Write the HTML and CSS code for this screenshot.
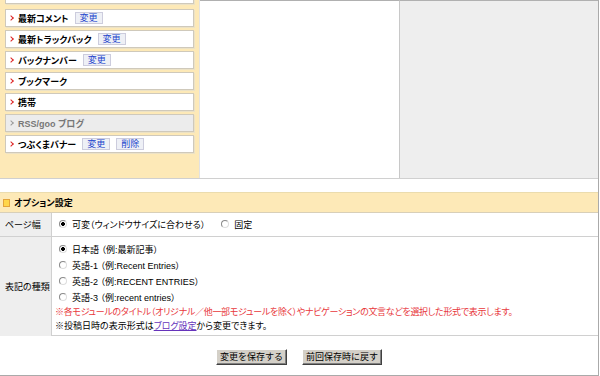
FILE: index.html
```html
<!DOCTYPE html>
<html lang="ja">
<head>
    <meta charset="UTF-8">
    <title>デザイン設定</title>
    <link rel="stylesheet" href="styles.css">
</head>
<body>
    <div class="page">
        <div class="layout">
            <div class="side">
                <ul class="mods">
                    <li class="mod mod-cut"></li>
                    <li class="mod"><span class="name">最新コメント</span><span class="tag">変更</span></li>
                    <li class="mod"><span class="name">最新トラックバック</span><span class="tag">変更</span></li>
                    <li class="mod"><span class="name">バックナンバー</span><span class="tag">変更</span></li>
                    <li class="mod"><span class="name">ブックマーク</span></li>
                    <li class="mod"><span class="name">携帯</span></li>
                    <li class="mod mod-off"><span class="name">RSS/goo ブログ</span></li>
                    <li class="mod"><span class="name">つぶくまバナー</span><span class="tag">変更</span><span class="tag">削除</span></li>
                </ul>
            </div>
            <div class="main"></div>
            <div class="extra"></div>
        </div>

        <div class="options">
            <h2 class="opt-head"><span class="opt-icon"></span>オプション設定</h2>
            <table class="opt-table">
                <tr class="row-width">
                    <th>ページ幅</th>
                    <td>
                        <label class="choice"><input type="radio" name="width" checked>可変（ウィンドウサイズに合わせる）</label>
                        <label class="choice choice-fixed"><input type="radio" name="width">固定</label>
                    </td>
                </tr>
                <tr class="row-lang">
                    <th>表記の種類</th>
                    <td>
                        <label class="choice line"><input type="radio" name="lang" checked>日本語 （例:最新記事）</label>
                        <label class="choice line"><input type="radio" name="lang">英語-1 （例:Recent Entries）</label>
                        <label class="choice line"><input type="radio" name="lang">英語-2 （例:RECENT ENTRIES）</label>
                        <label class="choice line"><input type="radio" name="lang">英語-3 （例:recent entries）</label>
                        <p class="note note-red">※各モジュールのタイトル（オリジナル／他一部モジュールを除く）やナビゲーションの文言などを選択した形式で表示します。</p>
                        <p class="note">※投稿日時の表示形式は<a href="#">ブログ設定</a>から変更できます。</p>
                    </td>
                </tr>
            </table>
            <div class="actions">
                <button>変更を保存する</button>
                <button>前回保存時に戻す</button>
            </div>
        </div>
    </div>
</body>
</html>
```

FILE: styles.css
```css
body {
    margin: 0;
    font-family: "Noto Sans CJK JP", sans-serif;
    font-size: 9px;
    font-feature-settings: "palt";
    color: #000;
    background-color: #fff;
}

.page {
    width: 598px;
    height: 375px;
    border-right: 1px solid #aaa;
    border-bottom: 1px solid #aaa;
    overflow: hidden;
}

/* top preview area */

.layout {
    display: flex;
    height: 178px;
    border-bottom: 1px solid #d0d0d0;
}

.side {
    width: 199px;
    background-color: #fde9b7;
    border-right: 1px solid #e2e2e2;
}

.main {
    width: 199px;
    border-top: 1px solid #b0b0b0;
    border-right: 1px solid #c8c8c8;
}

.extra {
    flex: 1;
    border-top: 1px solid #b0b0b0;
    background-color: #eee;
}

.mods {
    list-style: none;
    margin: -14px 0 0;
    padding: 0 5px 0 5px;
    display: flex;
    flex-direction: column;
    gap: 3px;
}

.mod {
    height: 16px;
    display: flex;
    align-items: center;
    gap: 6px;
    padding-left: 12px;
    position: relative;
    background-color: #fff;
    border: 1px solid #cfc9bb;
    box-shadow: 1px 1px 0 #ece2c6;
    font-weight: bold;
}

.mod::before {
    content: "";
    position: absolute;
    left: 3px;
    top: 6px;
    width: 3px;
    height: 3px;
    border-top: 1.5px solid #d22;
    border-right: 1.5px solid #d22;
    transform: rotate(45deg);
}

.mod-cut {
    margin-bottom: 2px;
}

.mod-cut::before {
    display: none;
}

.mod-off {
    background-color: #ececec;
    color: #777;
    font-family: "Liberation Sans", "Noto Sans CJK JP", sans-serif;
}

.mod-off::before {
    border-color: #999;
}

.tag {
    height: 10px;
    line-height: 10px;
    padding: 0 4px;
    background-color: #eef0f6;
    border: 1px solid #ccd;
    color: #2244cc;
    font-weight: normal;
}

/* option panel */

.options {
    margin-top: 13px;
}

.opt-head {
    margin: 0;
    height: 19px;
    display: flex;
    align-items: center;
    gap: 4px;
    padding-left: 3px;
    font-size: 9px;
    background-color: #fde9b7;
    border-top: 1px solid #ebdcae;
    border-bottom: 1px solid #d8cfb8;
}

.opt-icon {
    width: 5px;
    height: 6px;
    background-color: #ffd64a;
    border: 1px solid #e3a43a;
}

.opt-table {
    width: 100%;
    border-collapse: collapse;
}

.opt-table th {
    width: 46px;
    padding: 0 0 0 5px;
    text-align: left;
    font-weight: normal;
    background-color: #eee;
    border-right: 1px solid #d0d0d0;
    vertical-align: middle;
}

.opt-table td {
    padding: 0 0 0 3px;
}

.row-width th,
.row-width td {
    height: 23px;
    border-bottom: 1px solid #d0d0d0;
}

.row-lang td {
    padding-top: 4px;
    padding-bottom: 2px;
    border-bottom: 1px solid #d0d0d0;
}

.choice {
    display: inline-flex;
    align-items: center;
    gap: 5px;
    margin-left: 4px;
    font-family: "Liberation Sans", "Noto Sans CJK JP", sans-serif;
}

.choice-fixed {
    margin-left: 14px;
}

.line {
    display: flex;
    height: 16px;
}

.choice input {
    appearance: none;
    margin: 0;
    width: 8px;
    height: 8px;
    border-radius: 50%;
    border: 1px solid #8a8a8a;
    border-right-color: #ddd;
    border-bottom-color: #ddd;
    background-color: #fff;
}

.choice input:checked {
    background: radial-gradient(circle, #000 0 1.6px, #fff 2.2px);
}

.note {
    margin: 0;
    height: 14px;
    line-height: 14px;
}

.note-red {
    color: #e8383c;
    letter-spacing: -0.3px;
}

.note a {
    color: #6633bb;
}

.actions {
    display: flex;
    justify-content: center;
    gap: 15px;
    padding-top: 13px;
}

.actions button {
    height: 16px;
    padding: 0 3px;
    font-family: "Noto Sans CJK JP", sans-serif;
    font-size: 9px;
    line-height: 12px;
    color: #000;
    background-color: #d4d0c8;
    border: 1px solid;
    border-color: #fff #404040 #404040 #fff;
    box-shadow: inset -1px -1px 0 #808080;
}
```
